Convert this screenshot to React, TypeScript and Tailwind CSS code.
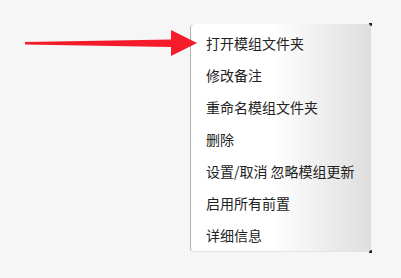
const items = [
  "打开模组文件夹",
  "修改备注",
  "重命名模组文件夹",
  "删除",
  "设置/取消 忽略模组更新",
  "启用所有前置",
  "详细信息",
];

export default function App() {
  return (
    <div
      className="relative w-[401px] h-[278px] bg-[#f6f6f6] pl-[190px] pt-[24px]"
      style={{ fontFamily: '"Noto Sans CJK SC", "Noto Sans", sans-serif' }}
    >
      {/* Context menu */}
      <div className="relative w-[181px] h-[228px] rounded-[4px] border-l border-b border-l-[#b4b4b4] border-b-[#e4e4e4] bg-gradient-to-r from-white from-45% to-[#dedede] pt-[3px]">
        {items.map((label) => (
          <div
            key={label}
            className="h-8 flex items-center pl-[15px] text-[14px] text-[#222222] whitespace-nowrap"
          >
            {label}
          </div>
        ))}
        <div className="absolute -right-[1px] -top-[1px] w-[3px] h-[3px] bg-[#222] rounded-bl-[3px]" />
        <div className="absolute -right-[1px] -bottom-[2px] w-[3px] h-[3px] bg-[#222] rounded-tl-[3px]" />
      </div>

      {/* Annotation arrow */}
      <svg
        className="absolute left-0 top-0 pointer-events-none"
        width="401"
        height="278"
        viewBox="0 0 401 278"
      >
        <polygon
          points="25,42 171,39.5 171,30 197,43 171,56 171,47 25,44.5"
          fill="#f41b2b"
        />
      </svg>
    </div>
  );
}
